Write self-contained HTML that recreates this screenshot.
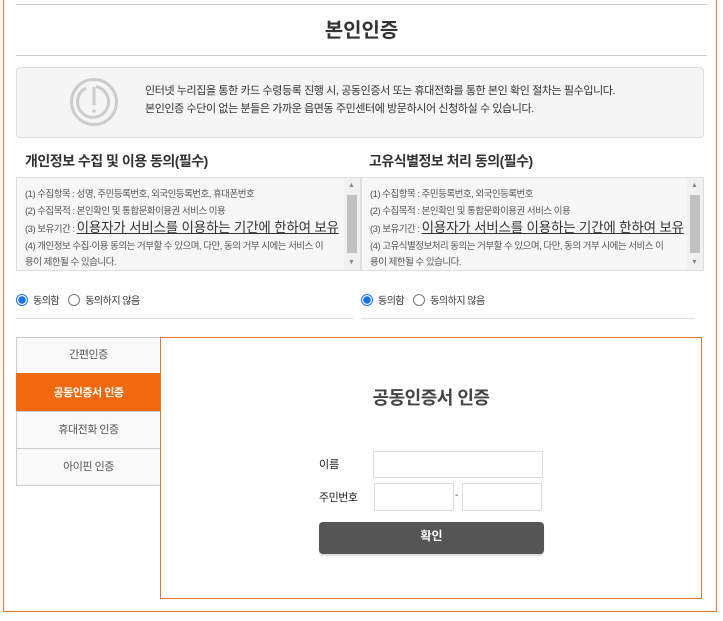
<!DOCTYPE html>
<html><head><meta charset="utf-8">
<style>
*{box-sizing:border-box;margin:0;padding:0}
body{width:723px;height:621px;background:#fff;font-family:"Liberation Sans","Noto Sans CJK KR",sans-serif;color:#333;position:relative;overflow:hidden}
.a{position:absolute}
.outer{left:3px;top:-5px;width:714px;height:617px;border:1px solid #e8772e}
.tb{background:#f7f7f7;border:1px solid #ddd;overflow:hidden}
.tb .t{position:absolute;left:8px;top:9px;font-size:9.5px;line-height:16.5px;letter-spacing:-0.5px;color:#555;white-space:nowrap}
.tb .t u{font-size:13.5px;color:#333;letter-spacing:-0.2px}
.sb{position:absolute;right:0;top:0;width:16px;height:100%;background:#f1f1f1}
.sb i{position:absolute;left:3px;width:10px;top:17px;bottom:17px;background:#c1c1c1}
.sb b{position:absolute;left:4px;font-size:7px;color:#888;font-weight:normal}
.rad{font-size:10px;letter-spacing:-0.5px;color:#333}
.rb{display:inline-block;width:12px;height:12px;border-radius:50%;border:1px solid #777;vertical-align:-2px;margin-right:5px}
.rb.on{border:1px solid #1a73e8;background:radial-gradient(circle,#1a73e8 3.5px,#fff 4px)}
.tab{left:16px;width:145px;background:#f9f9f9;border:1px solid #ccc;font-size:11px;color:#555;text-align:center;letter-spacing:-0.5px}
.inp{border:1px solid #ddd;background:#fff}
</style></head><body>
<div class="a outer"></div>
<div class="a" style="left:16px;top:4px;width:691px;border-top:1px solid #ccc"></div>
<div class="a" style="left:0;width:723px;top:14px;text-align:center;font-size:20px;font-weight:bold;color:#333">본인인증</div>
<div class="a" style="left:16px;top:55px;width:691px;border-top:1px solid #ccc"></div>
<div class="a" style="left:16px;top:67px;width:688px;height:71px;background:#f5f5f5;border:1px solid #ddd;border-radius:4px"></div>
<svg class="a" style="left:68px;top:76px" width="52" height="52" viewBox="0 0 52 52"><circle cx="26" cy="26" r="22.5" fill="none" stroke="#ccc" stroke-width="3"/><path d="M18 12 A15.5 15.5 0 1 0 28 10.6" fill="none" stroke="#ccc" stroke-width="3"/><line x1="26" y1="11" x2="26" y2="29" stroke="#ccc" stroke-width="3"/><circle cx="26" cy="35" r="1.8" fill="#ccc"/></svg>
<div class="a" style="left:145px;top:82px;font-size:11px;line-height:18px;letter-spacing:-0.4px;color:#333;white-space:nowrap">인터넷 누리집을 통한 카드 수령등록 진행 시, 공동인증서 또는 휴대전화를 통한 본인 확인 절차는 필수입니다.<br>본인인증 수단이 없는 분들은 가까운 읍면동 주민센터에 방문하시어 신청하실 수 있습니다.</div>
<div class="a" style="left:25px;top:151px;font-size:14px;font-weight:bold;letter-spacing:-0.5px;color:#333">개인정보 수집 및 이용 동의(필수)</div>
<div class="a" style="left:369px;top:151px;font-size:14px;font-weight:bold;letter-spacing:-0.5px;color:#333">고유식별정보 처리 동의(필수)</div>
<div class="a tb" style="left:16px;top:177px;width:345px;height:94px"><div class="t">(1) 수집항목 : 성명, 주민등록번호, 외국인등록번호, 휴대폰번호<br>(2) 수집목적 : 본인확인 및 통합문화이용권 서비스 이용<br>(3) 보유기간 : <u>이용자가 서비스를 이용하는 기간에 한하여 보유</u><br>(4) 개인정보 수집·이용 동의는 거부할 수 있으며, 다만, 동의 거부 시에는 서비스 이<br>용이 제한될 수 있습니다.</div><div class="sb"><b style="top:4px">▲</b><i></i><b style="bottom:4px">▼</b></div></div>
<div class="a tb" style="left:361px;top:177px;width:343px;height:94px"><div class="t">(1) 수집항목 : 주민등록번호, 외국인등록번호<br>(2) 수집목적 : 본인확인 및 통합문화이용권 서비스 이용<br>(3) 보유기간 : <u>이용자가 서비스를 이용하는 기간에 한하여 보유</u><br>(4) 고유식별정보처리 동의는 거부할 수 있으며, 다만, 동의 거부 시에는 서비스 이<br>용이 제한될 수 있습니다.</div><div class="sb"><b style="top:4px">▲</b><i></i><b style="bottom:4px">▼</b></div></div>
<div class="a rad" style="left:16px;top:292px"><span class="rb on"></span>동의함 &nbsp;&nbsp;&nbsp;<span class="rb"></span>동의하지 않음</div>
<div class="a rad" style="left:361px;top:292px"><span class="rb on"></span>동의함 &nbsp;&nbsp;&nbsp;<span class="rb"></span>동의하지 않음</div>
<div class="a" style="left:16px;top:318px;width:337px;border-top:1px solid #ddd"></div>
<div class="a" style="left:361px;top:318px;width:334px;border-top:1px solid #ddd"></div>
<div class="a tab" style="top:337px;height:37px;line-height:35px">간편인증</div>
<div class="a tab" style="top:373px;height:38px;line-height:38px;background:#f0690f;border-color:#f0690f;color:#fff;font-weight:bold">공동인증서 인증</div>
<div class="a tab" style="top:411px;height:38px;line-height:36px">휴대전화 인증</div>
<div class="a tab" style="top:448px;height:38px;line-height:36px">아이핀 인증</div>
<div class="a" style="left:160px;top:337px;width:542px;height:262px;border:1px solid #e8772e;background:#fff"></div>
<div class="a" style="left:160px;width:542px;top:384px;text-align:center;font-size:18px;font-weight:bold;color:#444;letter-spacing:-0.5px">공동인증서 인증</div>
<div class="a" style="left:319px;top:456px;font-size:11px;color:#222">이름</div>
<div class="a inp" style="left:373px;top:451px;width:170px;height:27px"></div>
<div class="a" style="left:319px;top:489px;font-size:11px;color:#222;letter-spacing:-0.5px">주민번호</div>
<div class="a inp" style="left:374px;top:483px;width:80px;height:28px"></div>
<div class="a" style="left:455px;top:490px;font-size:10px">-</div>
<div class="a inp" style="left:462px;top:483px;width:80px;height:28px"></div>
<div class="a" style="left:319px;top:522px;width:225px;height:32px;background:#555;border-radius:4px;box-shadow:0 2px 1px #ddd;color:#fff;font-size:12px;font-weight:bold;text-align:center;line-height:28px">확인</div>
</body></html>
